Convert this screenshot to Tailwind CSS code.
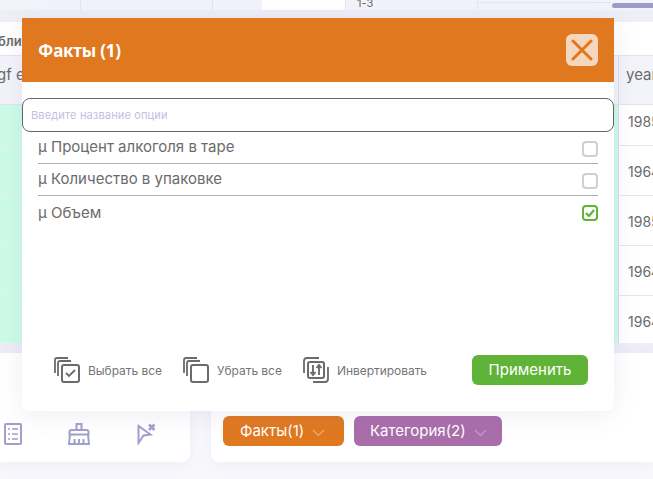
<!DOCTYPE html>
<html><head><meta charset="utf-8"><script src="https://cdn.jsdelivr.net/npm/@tailwindcss/browser@4"></script></head>
<body class="m-0">
<div class="relative w-[653px] h-[479px] overflow-hidden bg-[#f8f8fc] font-['Inter',sans-serif] text-[#6b6b6b]">
  <!-- top strip -->
  <div class="flex h-[10px] bg-[#f3f3fa] text-[11px] leading-[6px] overflow-hidden">
    <div class="w-[81px] shrink-0 border-r border-[#e4e4f2]"></div>
    <div class="w-[132px] shrink-0 border-r border-[#e4e4f2]"></div>
    <div class="w-[49px] shrink-0"></div>
    <div class="w-[83px] shrink-0 bg-white"></div>
    <div class="w-[133px] shrink-0 border-x border-[#e4e4f2] pl-[11px]">1-3</div>
    <div class="flex-1"><div class="border-b border-[#e4e4f2] h-[3px] w-[133px]"></div></div>
  </div>
  <div class="relative h-[12px] bg-[#eeeef7]">
    <div class="absolute left-[612px] -top-[7px] w-[60px] h-[5px] rounded-full bg-[#9c9ccc]"></div>
  </div>
  <!-- table card -->
  <div class="bg-white h-[33px] overflow-hidden">
    <div class="pt-[11px] text-[13px] font-semibold leading-[16px] whitespace-nowrap -ml-[17px]">Таблица</div>
  </div>
  <div class="flex h-[50px] bg-[#f3f3fa] border-y border-[#e2e2f2] text-[15px] overflow-hidden">
    <div class="w-[618px] shrink-0 pt-[9px] -indent-[3px] leading-[20px]">gf e</div>
    <div class="w-[35px] shrink-0 border-l border-[#dcdcee] pl-[7px] pt-[9px] leading-[20px]">year</div>
  </div>
  <div class="flex h-[238px] text-[14px] overflow-hidden">
    <div class="w-[618px] shrink-0 flex flex-col bg-[#ccfbe7]">
      <div class="h-[41px] shrink-0 border-b border-[#e0f5ea]"></div>
      <div class="h-[50px] shrink-0 border-b border-[#e0f5ea]"></div>
      <div class="h-[50px] shrink-0 border-b border-[#e0f5ea]"></div>
      <div class="h-[50px] shrink-0 border-b border-[#e0f5ea]"></div>
    </div>
    <div class="w-[35px] shrink-0 flex flex-col bg-white border-l border-[#dcdcee] whitespace-nowrap">
      <div class="h-[41px] shrink-0 leading-[34px] pl-[9px] border-b border-[#e6e6f4]">1985</div>
      <div class="h-[50px] shrink-0 leading-[52px] pl-[9px] border-b border-[#e6e6f4]">1964</div>
      <div class="h-[50px] shrink-0 leading-[52px] pl-[9px] border-b border-[#e6e6f4]">1985</div>
      <div class="h-[50px] shrink-0 leading-[52px] pl-[9px] border-b border-[#e6e6f4]">1964</div>
      <div class="h-[47px] shrink-0 leading-[52px] pl-[9px]">1964</div>
    </div>
  </div>
  <div class="h-[10px] bg-[#eeeef7]"></div>
  <!-- bottom cards -->
  <div class="flex gap-[21px] h-[109px]">
    <div class="w-[190px] bg-white rounded-br-[8px] shadow-[0_4px_16px_rgba(120,120,190,0.08)]">
      <div class="flex items-center pt-[70px]">
        <svg class="ml-[4px]" width="18" height="22" viewBox="0 0 18 22" fill="none" stroke="#a09fcd" stroke-width="2"><rect x="1" y="1" width="16" height="20" rx="1"/><path d="M4 6h2M8 6h6M4 11h2M8 11h6M4 16h2M8 16h6" stroke-width="1.6"/></svg>
        <svg class="ml-[46px]" width="22" height="22" viewBox="0 0 22 22" fill="none" stroke="#a09fcd" stroke-width="2"><path d="M8.500 7V1h5v6M1.500 11.500V9Q1.500 7 4 7h14q2.500 0 2.500 2v2.500zM2 11.500 1 21h20l-1-9.500M6.500 16v5M11 16v5M15.500 16v5"/></svg>
        <svg class="ml-[47px]" width="20" height="22" viewBox="0 0 20 22" fill="none" stroke="#a09fcd" stroke-width="2"><path d="M1.500 3v17l5-7.500 7-1z"/><path d="M12 1.500l5.500 5.500M17.500 1.500 12 7" stroke-width="2.500"/></svg>
      </div>
    </div>
    <div class="flex-1 bg-white rounded-bl-[8px] shadow-[0_4px_16px_rgba(120,120,190,0.08)] pt-[63px] pl-[12px] flex gap-[10px] items-start text-white text-[15px]">
      <div class="h-[30px] w-[121px] rounded-[6px] bg-[#e07820] flex items-center pl-[17px] gap-[8px]"><span>Факты(1)</span><svg class="mt-[3px]" width="13" height="8" viewBox="0 0 13 8" fill="none" stroke="#eca56c" stroke-width="1.500"><path d="M1 1l5.500 5.500L12 1"/></svg></div>
      <div class="h-[30px] w-[148px] rounded-[6px] bg-[#a96daa] flex items-center pl-[16px] gap-[8px]"><span>Категория(2)</span><svg class="mt-[3px]" width="13" height="8" viewBox="0 0 13 8" fill="none" stroke="#c298c3" stroke-width="1.500"><path d="M1 1l5.500 5.500L12 1"/></svg></div>
    </div>
  </div>

  <!-- modal -->
  <div class="absolute left-[22px] top-[18px] w-[592px] h-[393px] bg-white rounded-b-[8px] shadow-[0_4px_24px_rgba(120,120,190,0.12)] flex flex-col">
    <div class="h-[64px] shrink-0 bg-[#e07820] flex items-center justify-between px-[16px] text-white">
      <span class="font-['Noto_Sans',sans-serif] font-bold text-[17px] tracking-[-0.2px] mt-[1px]">Факты (1)</span>
      <button class="w-[32px] h-[32px] rounded-[6px] bg-[#f6d6bd] flex items-center justify-center">
        <svg width="22" height="22" viewBox="0 0 22 22" fill="none" stroke="#e07820" stroke-width="3" stroke-linecap="round"><path d="M2 2l18 18M20 2L2 20"/></svg>
      </button>
    </div>
    <div class="mt-[16px] h-[34px] shrink-0 border border-[#666] rounded-[8px] flex items-center pl-[8px] text-[11px] tracking-[0.15px] text-[#c2c0e0]">Введите название опции</div>
    <div class="px-[16px] text-[15px]">
      <div class="h-[32px] flex items-center justify-between border-b border-[#b0b0b0]"><span>μ Процент алкоголя в таре</span><span class="mt-[3px] w-[16px] h-[16px] rounded-[4px] border-2 border-[#d0d0d0]"></span></div>
      <div class="h-[32px] flex items-center justify-between border-b border-[#b0b0b0]"><span>μ Количество в упаковке</span><span class="mt-[3px] w-[16px] h-[16px] rounded-[4px] border-2 border-[#d0d0d0]"></span></div>
      <div class="h-[34px] flex items-center justify-between"><span>μ Объем</span><span class="w-[16px] h-[16px] rounded-[4px] border-2 border-[#5fb336] flex items-center justify-center"><svg width="10" height="8" viewBox="0 0 10 8" fill="none" stroke="#5fb336" stroke-width="2.200"><path d="M1 4l3 3 5-6"/></svg></span></div>
    </div>
    <div class="mt-auto mb-[26px] h-[30px] pl-[32px] pr-[26px] flex items-center text-[12px] tracking-[-0.05px] text-[#757575]">
      <div class="flex items-center gap-[8px] w-[129px]">
        <svg width="26" height="26" viewBox="0 0 26 26" fill="none" stroke="#6b6b6b" stroke-width="1.800"><path d="M14 1H3Q1 1 1 3v13"/><path d="M17 4H6Q4 4 4 6v13"/><rect x="8" y="8" width="17" height="17" rx="2" stroke-width="2"/><path d="M12 16l3 3 6-6"/></svg>
        <span class="mt-[1px]">Выбрать все</span>
      </div>
      <div class="flex items-center gap-[8px] w-[120px]">
        <svg width="26" height="26" viewBox="0 0 26 26" fill="none" stroke="#6b6b6b" stroke-width="1.800"><path d="M14 1H3Q1 1 1 3v13"/><path d="M17 4H6Q4 4 4 6v13"/><rect x="8" y="8" width="17" height="17" rx="2" stroke-width="2"/></svg>
        <span class="mt-[1px]">Убрать все</span>
      </div>
      <div class="flex items-center gap-[8px]">
        <svg width="26" height="26" viewBox="0 0 26 26" fill="none" stroke="#6b6b6b" stroke-width="1.800"><path d="M16 1H4Q1 1 1 4v12"/><rect x="5" y="5" width="16" height="16" rx="2" stroke-width="2"/><path d="M25 10v12q0 3-3 3H10"/><path d="M10 8v10M7.500 15l2.500 3 2.500-3M16 18V8M13.500 11 16 8l2.500 3" stroke-width="1.900"/></svg>
        <span class="mt-[1px]">Инвертировать</span>
      </div>
      <button class="ml-auto w-[116px] h-[30px] rounded-[6px] bg-[#5fb336] text-white text-[15px] tracking-normal">Применить</button>
    </div>
  </div>
</div>
</body></html>
